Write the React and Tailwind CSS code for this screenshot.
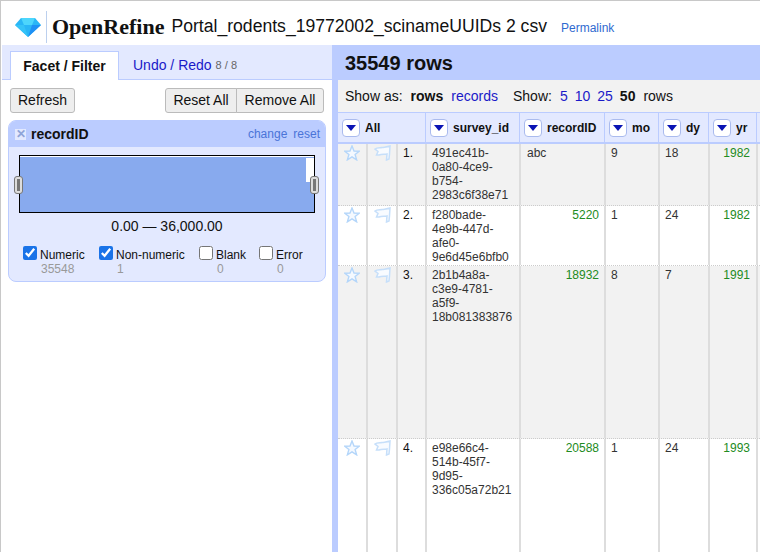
import React from 'react';

const headerCols = [
  { label: 'All', width: 'w-[88px]' },
  { label: 'survey_id', width: 'w-[94px]' },
  { label: 'recordID', width: 'w-[85px]' },
  { label: 'mo', width: 'w-[54px]' },
  { label: 'dy', width: 'w-[50px]' },
  { label: 'yr', width: 'w-[48px]' },
];

const rows = [
  { n: '1.', id: ['491ec41b-', '0a80-4ce9-', 'b754-', '2983c6f38e71'], rec: 'abc', mo: '9', dy: '18', yr: '1982', h: 'h-[62px]', bg: 'bg-[#f2f2f2]' },
  { n: '2.', id: ['f280bade-', '4e9b-447d-', 'afe0-', '9e6d45e6bfb0'], rec: '5220', mo: '1', dy: '24', yr: '1982', h: 'h-[60px]', bg: 'bg-white' },
  { n: '3.', id: ['2b1b4a8a-', 'c3e9-4781-', 'a5f9-', '18b081383876'], rec: '18932', mo: '8', dy: '7', yr: '1991', h: 'h-[173px]', bg: 'bg-[#f2f2f2]' },
  { n: '4.', id: ['e98e66c4-', '514b-45f7-', '9d95-', '336c05a72b21'], rec: '20588', mo: '1', dy: '24', yr: '1993', h: 'h-[120px]', bg: 'bg-white' },
];

const filters = [
  { label: 'Numeric', count: '35548', checked: true, width: 'w-[76px]' },
  { label: 'Non-numeric', count: '1', checked: true, width: 'w-[100px]' },
  { label: 'Blank', count: '0', checked: false, width: 'w-[60px]' },
  { label: 'Error', count: '0', checked: false, width: 'w-[50px]' },
];

const Gem = () => (
  <svg width="26" height="20" viewBox="0 0 26 20">
    <polygon points="6,1 20,1 26,8 13,20 0,8" fill="#29b6f6" />
    <polygon points="6,1 20,1 17,8 9,8" fill="#4dd6fc" />
    <polygon points="0,8 9,8 13,20" fill="#35c3f8" />
    <polygon points="17,8 26,8 13,20" fill="#1e90f5" />
  </svg>
);

const Star = () => (
  <svg width="16" height="16" viewBox="0 0 16 16" fill="#f4f9ff" stroke="#b4d6fa" strokeWidth="1.4">
    <polygon points="8,1 10,6 15.3,6.2 11.1,9.5 12.6,14.8 8,11.8 3.4,14.8 4.9,9.5 0.7,6.2 6,6" />
  </svg>
);

const Flag = () => (
  <svg width="17" height="16" viewBox="0 0 17 16" fill="#f8fbff" stroke="#c6dffa" strokeWidth="1.5">
    <path d="M1 4 C3 2 6 3 8 2.5 C11 2 13 2 16 1 L15.5 9 L15 14 L12.5 15 L13 9 C10 9.5 8 9 5 10 L2.5 10 L4 6.5 Z" />
  </svg>
);

const DropButton = () => (
  <span className="flex h-[18px] w-[18px] shrink-0 items-center justify-center rounded-[4px] border border-[#aabbee] bg-white">
    <svg width="10" height="6" viewBox="0 0 10 6">
      <polygon points="0,0 10,0 5,6" fill="#0a14b4" />
    </svg>
  </span>
);

const Handle = () => (
  <span className="flex h-[18px] w-[9px] items-center justify-center rounded-[3px] border border-[#777] bg-[#ddd]">
    <span className="h-[12px] w-[3px] bg-[#777]" />
  </span>
);

function App() {
  return (
    <div className="flex h-[552px] w-[760px] flex-col overflow-hidden border-t border-l border-[#c8c8c8] bg-white font-['Liberation_Sans',Arial,sans-serif] text-[#111]">
      <header className="flex h-[44px] shrink-0 items-center pt-[7px] pl-[14px]">
        <Gem />
        <div className="ml-[5px] h-[32px] w-px bg-[#bcd0ee]" />
        <span className="ml-[5px] font-['Liberation_Serif',serif] text-[22px] leading-none font-bold">OpenRefine</span>
        <span className="ml-[7px] text-[17.6px] leading-none">Portal_rodents_19772002_scinameUUIDs 2 csv</span>
        <a className="mt-[3px] ml-[14px] text-[12px] text-[#2f6ad0]">Permalink</a>
      </header>

      <div className="flex min-h-0 flex-1">
        <aside className="ml-px w-[330px] shrink-0">
          <div className="flex h-[35px] items-end border-b border-[#bbccff] bg-[#e3e9ff] pl-[8px]">
            <div className="z-10 -mb-px flex h-[29px] w-[109px] items-center justify-center border border-b-0 border-[#bbccff] bg-white text-[14px] font-bold">
              Facet / Filter
            </div>
            <div className="flex h-[28px] items-center pl-[14px]">
              <a className="text-[14px] text-[#1a1ac8]">Undo / Redo</a>
              <span className="ml-[4px] text-[11px] text-[#666]">8 / 8</span>
            </div>
          </div>

          <div className="flex justify-between pt-[8px] pr-[8px] pl-[8px]">
            <button className="h-[25px] w-[65px] rounded-[3px] border border-[#bbb] bg-[#eee] text-[14px]">Refresh</button>
            <div className="flex">
              <button className="h-[25px] w-[72px] rounded-l-[3px] border border-[#bbb] bg-[#eee] text-[14px]">Reset All</button>
              <button className="-ml-px h-[25px] w-[88px] rounded-r-[3px] border border-[#bbb] bg-[#eee] text-[14px]">Remove All</button>
            </div>
          </div>

          <section className="mt-[7px] mr-[6px] ml-[6px] h-[162px] overflow-hidden rounded-[8px] border border-[#bbccff] bg-[#e3e9ff]">
            <div className="flex h-[26px] items-center justify-between bg-[#bbccff] pr-[5px] pl-[6px]">
              <div className="flex items-center">
                <span className="flex h-[11px] w-[11px] items-center justify-center bg-[#e3e9ff] text-[12px] leading-none font-bold text-[#8ea4d8]">✕</span>
                <span className="ml-[5px] text-[14px] font-bold">recordID</span>
              </div>
              <div className="flex gap-[6px] text-[12px] text-[#4a74d8]">
                <a>change</a>
                <a>reset</a>
              </div>
            </div>

            <div className="relative mx-[10px] mt-[8px] h-[58px] border border-black bg-white pt-px">
              <div className="h-[55px] bg-[#88aaee]" />
              <div className="absolute top-[2px] right-0 h-[24px] w-[8px] bg-white" />
              <div className="absolute top-[20px] -left-[6px]"><Handle /></div>
              <div className="absolute top-[20px] -right-[5px]"><Handle /></div>
            </div>

            <div className="mt-[4px] text-center text-[14px] leading-[18px]">0.00 — 36,000.00</div>

            <div className="mt-[11px] flex pl-[14px]">
              {filters.map((f) => (
                <label key={f.label} className={`flex ${f.width}`}>
                  <input type="checkbox" readOnly checked={f.checked} className="h-[14px] w-[14px] shrink-0 accent-[#1a73e8]" />
                  <span className="ml-[3px] flex flex-col pt-[2px]">
                    <span className="text-[12px] leading-[14px]">{f.label}</span>
                    <span className="pl-[1px] text-[12px] leading-[14px] text-[#999]">{f.count}</span>
                  </span>
                </label>
              ))}
            </div>
          </section>
        </aside>

        <main className="flex min-w-0 flex-1 flex-col border-l-[6px] border-[#bbccff]">
          <div className="flex h-[35px] shrink-0 items-center bg-[#bbccff] pl-[7px] text-[20px] font-bold">35549 rows</div>
          <div className="flex h-[32px] shrink-0 items-center bg-[#f2f2f2] pl-[7px] text-[14px]">
            <span>Show as:</span>
            <b className="ml-[8px]">rows</b>
            <a className="ml-[8px] text-[#1a1ac8]">records</a>
            <span className="ml-[15px]">Show:</span>
            <a className="ml-[8px] text-[#1a1ac8]">5</a>
            <a className="ml-[7px] text-[#1a1ac8]">10</a>
            <a className="ml-[7px] text-[#1a1ac8]">25</a>
            <b className="ml-[7px]">50</b>
            <span className="ml-[8px]">rows</span>
          </div>

          <div className="flex h-[32px] shrink-0 border-t border-b-2 border-[#bbccff] bg-[#e3e9ff]">
            {headerCols.map((c) => (
              <div key={c.label} className={`flex ${c.width} shrink-0 items-center gap-[5px] border-r border-[#bbccff] pl-[4px] text-[12px] font-bold`}>
                <DropButton />
                <span>{c.label}</span>
              </div>
            ))}
            <div className="flex-1" />
          </div>

          {rows.map((r) => (
            <div key={r.n} className={`flex ${r.h} shrink-0 border-b border-dotted border-[#ccc] text-[12px] leading-[14px] text-[#333] ${r.bg}`}>
              <div className="flex w-[30px] shrink-0 justify-center border-r-2 border-[#ddd] pt-[1px]"><Star /></div>
              <div className="flex w-[30px] shrink-0 justify-center border-r-2 border-[#ddd] pt-[1px]"><Flag /></div>
              <div className="w-[29px] shrink-0 border-r-2 border-[#ddd] pt-[2px] pl-[5px] text-[#111]">{r.n}</div>
              <div className="w-[94px] shrink-0 border-r-2 border-[#ddd] pt-[2px] pl-[5px]">
                {r.id.map((line) => <div key={line}>{line}</div>)}
              </div>
              <div className={`w-[85px] shrink-0 border-r-2 border-[#ddd] pt-[2px] pr-[5px] pl-[6px] ${r.rec === 'abc' ? '' : 'text-right text-[#228b22]'}`}>{r.rec}</div>
              <div className="w-[54px] shrink-0 border-r-2 border-[#ddd] pt-[2px] pl-[5px]">{r.mo}</div>
              <div className="w-[50px] shrink-0 border-r-2 border-[#ddd] pt-[2px] pl-[5px]">{r.dy}</div>
              <div className="w-[48px] shrink-0 border-r-2 border-[#ddd] px-[6px] pt-[2px] text-right text-[#228b22]">{r.yr}</div>
            </div>
          ))}
        </main>
      </div>
    </div>
  );
}

export default App;
